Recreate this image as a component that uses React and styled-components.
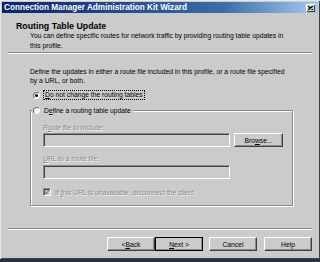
import React from 'react';
import styled, { createGlobalStyle } from 'styled-components';

const GlobalStyle = createGlobalStyle`
  html, body {
    margin: 0;
    padding: 0;
    background: #233246;
  }
  body {
    font-family: "Liberation Sans", Arial, sans-serif;
    font-size: 6.75px;
    color: #000;
  }
`

const Screen = styled.div`
  width: 320px;
  height: 262px;
  overflow: hidden;
  background: #233246;
`

const Window = styled.div`
  width: 320px;
  height: 259px;
  box-sizing: border-box;
  background: #cbcbcb;
  box-shadow: inset 1px 1px #e8e8e8, inset -1px -1px #404040;
  display: flex;
  flex-direction: column;
`

const TitleBar = styled.div`
  margin: 2px 2px 0;
  height: 11px;
  background: linear-gradient(to right, #0a246a, #3a6ea8 70%, #a6caf0);
  display: flex;
  align-items: center;
  justify-content: space-between;
  padding: 0 3px 0 2px;
`

const TitleText = styled.span`
  color: #fff;
  font-weight: bold;
  font-size: 8.2px;
  line-height: 11px;
  white-space: nowrap;
`

const CloseButton = styled.div`
  width: 9px;
  height: 8px;
  box-sizing: border-box;
  background: #cbcbcb;
  box-shadow: inset 1px 1px #fff, inset -1px -1px #404040;
  display: flex;
  align-items: center;
  justify-content: center;
`

const Header = styled.div`
  padding: 8px 0 0 16px;
`

const Heading = styled.div`
  font-weight: bold;
  font-size: 8.8px;
  line-height: 10px;
`

const Description = styled.div`
  padding-left: 14px;
  line-height: 10px;
`

const Separator = styled.div`
  margin: ${p => p.$top}px 8px 0;
  height: 1px;
  background: #8a8a8a;
  border-bottom: 1px solid #fff;
`

const Body = styled.div`
  padding: 13px 0 0 30px;
`

const Para = styled.div`
  line-height: 9px;
`

const RadioRow = styled.label`
  display: flex;
  align-items: center;
  gap: 4px;
  height: 10px;
  margin: 5px 0 0 3px;
`

const Radio = styled.span`
  width: 7px;
  height: 7px;
  box-sizing: border-box;
  border-radius: 50%;
  background: #fff;
  border: 1px solid;
  border-color: #6a6a6a #f4f4f4 #f4f4f4 #6a6a6a;
  display: flex;
  align-items: center;
  justify-content: center;
  &::after {
    content: '';
    width: 3px;
    height: 3px;
    border-radius: 50%;
    background: ${p => (p.$checked ? '#000' : 'transparent')};
  }
`

const RadioLabel = styled.span`
  line-height: 8px;
  padding: 0 1px;
  outline: ${p => (p.$focus ? '1px dotted #000' : 'none')};
  white-space: nowrap;
`

const Group = styled.fieldset`
  margin: 5px 0 0 0;
  width: 263px;
  box-sizing: border-box;
  padding: 8px 0 8px 12px;
  border: 1px solid #8a8a8a;
  box-shadow: inset 1px 1px #fff, 1px 1px #fff;
  min-width: 0;
`

const Legend = styled.legend`
  padding: 0 2px 0 1px;
  margin-left: -11px;
  background: #cbcbcb;
  display: flex;
  align-items: center;
  gap: 4px;
  height: 10px;
`

const Disabled = styled.div`
  color: #8a8a8a;
  text-shadow: 1px 1px #f2f2f2;
  line-height: 9px;
  margin-top: ${p => p.$top || 0}px;
  white-space: nowrap;
`

const FieldRow = styled.div`
  display: flex;
  gap: 4px;
  margin-top: ${p => p.$top}px;
`

const TextBox = styled.div`
  width: 187px;
  height: 14px;
  box-sizing: border-box;
  border: 1px solid;
  border-color: #8a8a8a #fff #fff #8a8a8a;
  box-shadow: inset 1px 1px #404040;
  background: #cbcbcb;
`

const Button = styled.div`
  width: ${p => p.$w || 48}px;
  height: 14px;
  box-sizing: border-box;
  background: #cbcbcb;
  border: 1px solid;
  border-color: #fff #404040 #404040 #fff;
  box-shadow: inset -1px -1px #8a8a8a;
  outline: ${p => (p.$default ? '1px solid #000' : 'none')};
  outline-offset: -1px;
  display: flex;
  align-items: center;
  justify-content: center;
  line-height: 9px;
  white-space: nowrap;
`

const CheckRow = styled.div`
  display: flex;
  align-items: center;
  gap: 4px;
  height: 10px;
  margin-top: 8px;
`

const CheckBox = styled.span`
  width: 8px;
  height: 8px;
  box-sizing: border-box;
  border: 1px solid;
  border-color: #8a8a8a #fff #fff #8a8a8a;
  box-shadow: inset 1px 1px #404040;
  background: #cbcbcb;
  display: flex;
  align-items: center;
  justify-content: center;
`

const ButtonBar = styled.div`
  display: flex;
  justify-content: flex-end;
  padding-right: 8px;
  margin-top: 7px;
`

const Spacer = styled.div`
  width: ${p => p.$w}px;
`

const U = styled.span`
  text-decoration: underline;
`

export default function App() {
  return (
    <Screen>
      <GlobalStyle />
      <Window>
        <TitleBar>
          <TitleText>Connection Manager Administration Kit Wizard</TitleText>
          <CloseButton>
            <svg width="5" height="4" viewBox="0 0 5 4">
              <path d="M0 0 L5 4 M5 0 L0 4" stroke="#000" strokeWidth="1.1" />
            </svg>
          </CloseButton>
        </TitleBar>
        <Header>
          <Heading>Routing Table Update</Heading>
          <Description>
            You can define specific routes for network traffic by providing routing table updates in
            <br />
            this profile.
          </Description>
        </Header>
        <Separator $top={1} />
        <Body>
          <Para>
            Define the updates in either a route file included in this profile, or a route file specified
            <br />
            by a URL, or both.
          </Para>
          <RadioRow>
            <Radio $checked />
            <RadioLabel $focus>
              <U>D</U>o not change the routing tables
            </RadioLabel>
          </RadioRow>
          <Group>
            <Legend>
              <Radio />
              <span>
                D<U>e</U>fine a routing table update
              </span>
            </Legend>
            <Disabled>
              R<U>o</U>ute file to include:
            </Disabled>
            <FieldRow $top={1}>
              <TextBox />
              <Button $w={49}>
                Bro<U>w</U>se...
              </Button>
            </FieldRow>
            <Disabled $top={7}>
              <U>U</U>RL to a route file:
            </Disabled>
            <FieldRow $top={2}>
              <TextBox />
            </FieldRow>
            <CheckRow>
              <CheckBox>
                <svg width="6" height="6" viewBox="0 0 6 6">
                  <path d="M0.5 2.5 L2.3 4.5 L5.5 0.8" stroke="#8a8a8a" strokeWidth="1.3" fill="none" />
                </svg>
              </CheckBox>
              <Disabled>
                If <U>t</U>his URL is unavailable, disconnect the client.
              </Disabled>
            </CheckRow>
          </Group>
        </Body>
        <Separator $top={22} />
        <ButtonBar>
          <Button>
            &lt; <U>B</U>ack
          </Button>
          <Button $default>
            <U>N</U>ext &gt;
          </Button>
          <Spacer $w={6} />
          <Button>Cancel</Button>
          <Spacer $w={7} />
          <Button>Help</Button>
        </ButtonBar>
      </Window>
    </Screen>
  );
}
